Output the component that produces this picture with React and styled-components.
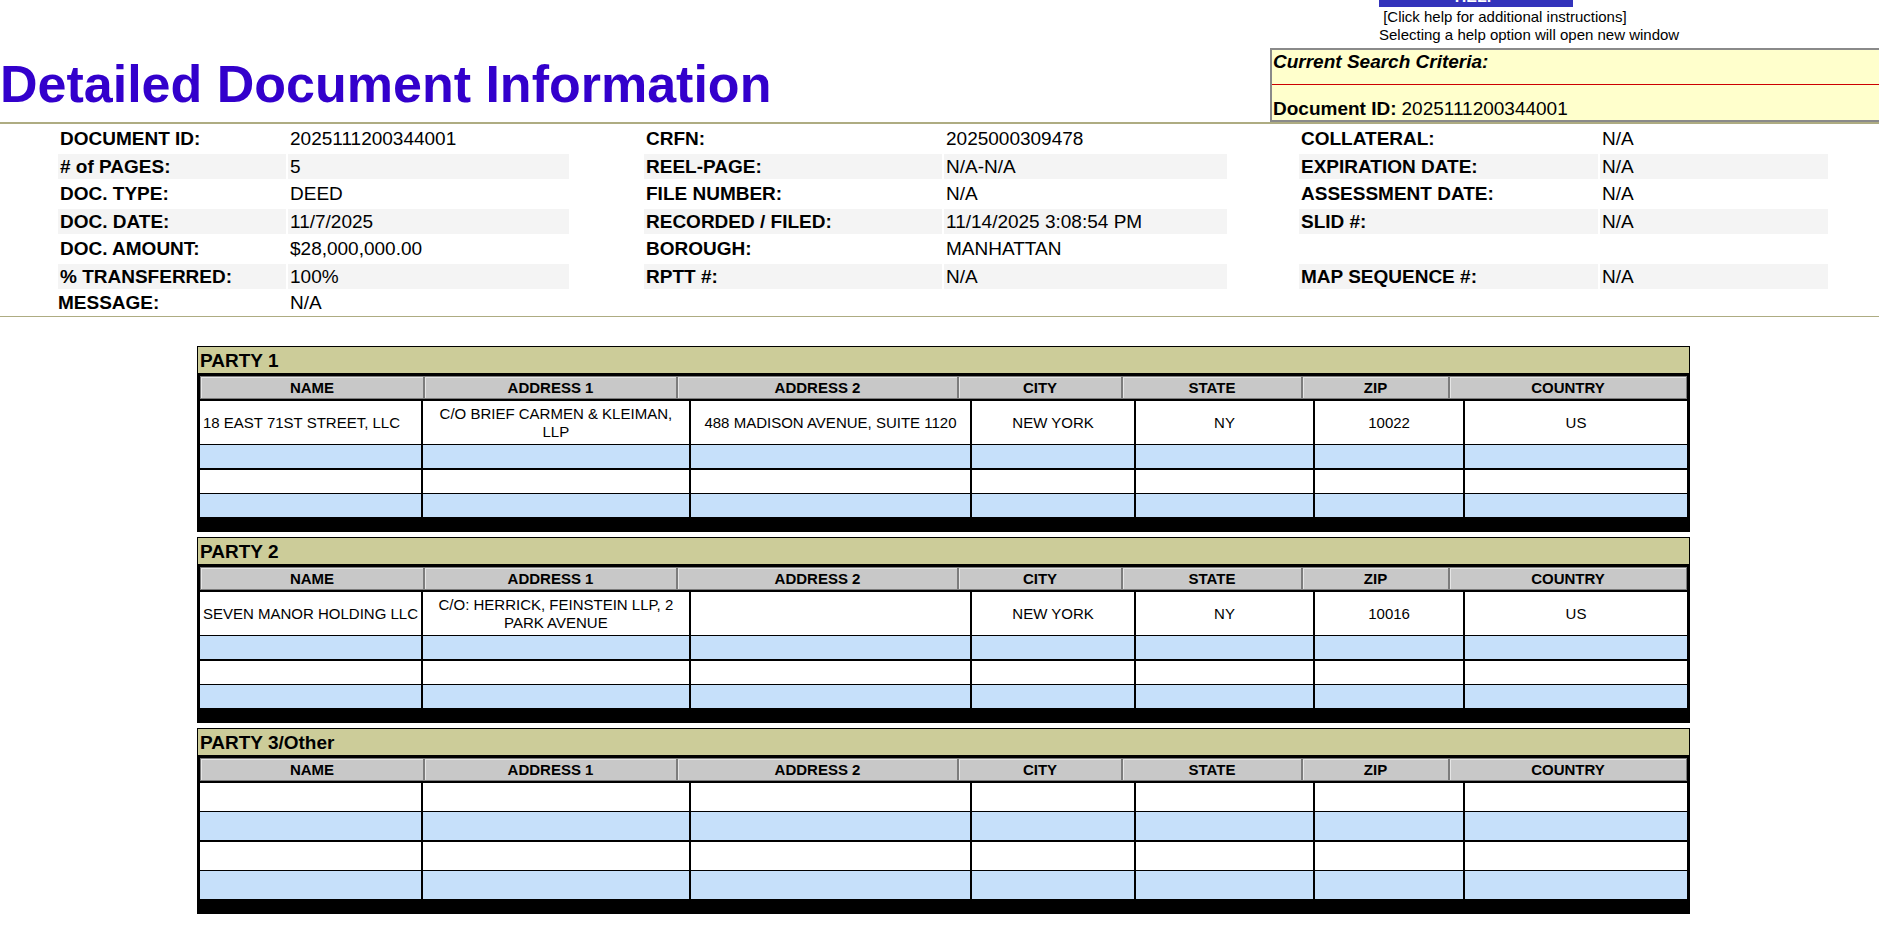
import React from 'react';
import styled, { createGlobalStyle } from 'styled-components';

const infoColumns = [
    {
        offset: 0,
        label: 228,
        value: 281,
        rows: [
            ['DOCUMENT ID:', '2025111200344001'],
            ['# of PAGES:', '5'],
            ['DOC. TYPE:', 'DEED'],
            ['DOC. DATE:', '11/7/2025'],
            ['DOC. AMOUNT:', '$28,000,000.00'],
            ['% TRANSFERRED:', '100%'],
        ],
    },
    {
        offset: 75,
        label: 298,
        value: 283,
        rows: [
            ['CRFN:', '2025000309478'],
            ['REEL-PAGE:', 'N/A-N/A'],
            ['FILE NUMBER:', 'N/A'],
            ['RECORDED / FILED:', '11/14/2025 3:08:54 PM'],
            ['BOROUGH:', 'MANHATTAN'],
            ['RPTT #:', 'N/A'],
        ],
    },
    {
        offset: 72,
        label: 299,
        value: 228,
        rows: [
            ['COLLATERAL:', 'N/A'],
            ['EXPIRATION DATE:', 'N/A'],
            ['ASSESSMENT DATE:', 'N/A'],
            ['SLID #:', 'N/A'],
            ['', ''],
            ['MAP SEQUENCE #:', 'N/A'],
        ],
    },
];

const headerCols = [224, 253, 281, 164, 180, 147, 238];
const dataCols = [223, 268, 282, 163, 179, 149, 224];
const headings = ['NAME', 'ADDRESS 1', 'ADDRESS 2', 'CITY', 'STATE', 'ZIP', 'COUNTRY'];

const empty = ['', '', '', '', '', '', ''];

const parties = [
    {
        title: 'PARTY 1',
        rows: [
            ['18 EAST 71ST STREET, LLC', 'C/O BRIEF CARMEN & KLEIMAN, LLP', '488 MADISON AVENUE, SUITE 1120', 'NEW YORK', 'NY', '10022', 'US'],
            empty, empty, empty,
        ],
    },
    {
        title: 'PARTY 2',
        rows: [
            ['SEVEN MANOR HOLDING LLC', 'C/O: HERRICK, FEINSTEIN LLP, 2 PARK AVENUE', '', 'NEW YORK', 'NY', '10016', 'US'],
            empty, empty, empty,
        ],
    },
    {
        title: 'PARTY 3/Other',
        rows: [empty, empty, empty, empty],
    },
];

const App = () => {
    return (
        <Page>
            <GlobalStyle />
            <Header>
                <Title>Detailed Document Information</Title>
                <RightBlock>
                    <HelpArea>
                        <HelpButton>HELP</HelpButton>
                        <HelpNote>&nbsp;[Click help for additional instructions]</HelpNote>
                        <HelpNote>Selecting a help option will open new window</HelpNote>
                    </HelpArea>
                    <CriteriaBox>
                        <CriteriaTitle>Current Search Criteria:</CriteriaTitle>
                        <CriteriaValue>
                            <b>Document ID:</b> 2025111200344001
                        </CriteriaValue>
                    </CriteriaBox>
                </RightBlock>
            </Header>
            <Rule />

            {/* document fields */}
            <InfoSection>
                {infoColumns.map((col, ci) => (
                    <InfoColumn key={ci} offset={col.offset} label={col.label} value={col.value}>
                        {col.rows.map(([label, value], ri) => (
                            <React.Fragment key={ri}>
                                <InfoLabel shaded={ri % 2 === 1}>{label}</InfoLabel>
                                <InfoValue shaded={ri % 2 === 1}>{value}</InfoValue>
                            </React.Fragment>
                        ))}
                    </InfoColumn>
                ))}
            </InfoSection>
            <MessageRow>
                <MessageLabel>MESSAGE:</MessageLabel>
                <InfoValue>N/A</InfoValue>
            </MessageRow>
            <Rule thin />

            {/* parties */}
            <Parties>
                {parties.map((party) => (
                    <PartyPanel key={party.title}>
                        <PartyTitle>{party.title}</PartyTitle>
                        <PartyBody>
                            <HeadRow>
                                {headings.map((h) => (
                                    <HeadCell key={h}>{h}</HeadCell>
                                ))}
                            </HeadRow>
                            <DataTable>
                                {party.rows.map((row, ri) => (
                                    <DataRow key={ri} thick={ri === 1}>
                                        {row.map((cell, ci) => (
                                            <DataCell key={ci} blue={ri % 2 === 1} left={ci === 0}>
                                                {cell}
                                            </DataCell>
                                        ))}
                                    </DataRow>
                                ))}
                            </DataTable>
                        </PartyBody>
                    </PartyPanel>
                ))}
            </Parties>
        </Page>
    );
};

export default App;

// Styled Components
const GlobalStyle = createGlobalStyle`
    body {
        margin: 0;
        background: #fff;
        overflow: hidden;
        font-family: "Liberation Sans", Arial, sans-serif;
        color: #000;
    }
`;

const Page = styled.div`
    width: 1879px;
    overflow: hidden;
`;

const Header = styled.div`
    display: flex;
    justify-content: space-between;
    align-items: flex-end;
    height: 122px;
`;

const Title = styled.h1`
    margin: 0 0 8px 0;
    font-size: 52px;
    line-height: 60px;
    font-weight: bold;
    color: #3300cc;
    white-space: nowrap;
`;

const RightBlock = styled.div`
    width: 609px;
    display: flex;
    flex-direction: column;
`;

const HelpArea = styled.div`
    padding-left: 109px;
    padding-bottom: 4px;
`;

const HelpButton = styled.div`
    width: 194px;
    height: 28px;
    margin-top: -21px;
    margin-bottom: 1px;
    box-sizing: border-box;
    padding-top: 10px;
    background: #3333bb;
    color: #fff;
    font-weight: bold;
    font-size: 16px;
    line-height: 16px;
    text-align: center;
    overflow: hidden;
`;

const HelpNote = styled.div`
    font-size: 15px;
    line-height: 18px;
    white-space: nowrap;
`;

const CriteriaBox = styled.div`
    width: 640px;
    height: 74px;
    box-sizing: border-box;
    background: #ffffcc;
    border: 2px solid #8a8a8a;
    border-right: none;
    display: flex;
    flex-direction: column;
`;

const CriteriaTitle = styled.div`
    height: 34px;
    padding-left: 1px;
    font-size: 19px;
    line-height: 24px;
    font-weight: bold;
    font-style: italic;
    border-bottom: 1px solid #cc0000;
`;

const CriteriaValue = styled.div`
    flex: 1;
    display: flex;
    align-items: flex-end;
    gap: 5px;
    padding-left: 1px;
    font-size: 19px;
    line-height: 22px;
`;

const Rule = styled.div`
    height: ${({ thin }) => (thin ? '1px' : '2px')};
    background: #aeac82;
`;

const InfoSection = styled.div`
    display: flex;
    padding: 2px 0 0 58px;
`;

const InfoColumn = styled.div`
    display: grid;
    margin-left: ${({ offset }) => offset}px;
    grid-template-columns: ${({ label, value }) => `${label}px ${value}px`};
    grid-auto-rows: 25.5px;
    column-gap: 2px;
    row-gap: 2px;
`;

const InfoLabel = styled.div`
    padding-left: 2px;
    font-size: 19px;
    font-weight: bold;
    line-height: 26px;
    white-space: nowrap;
    background: ${({ shaded }) => (shaded ? '#f4f4f4' : 'transparent')};
`;

const InfoValue = styled.div`
    padding-left: 2px;
    font-size: 19px;
    line-height: 26px;
    white-space: nowrap;
    background: ${({ shaded }) => (shaded ? '#f4f4f4' : 'transparent')};
`;

const MessageRow = styled.div`
    display: flex;
    gap: 2px;
    height: 25.5px;
    margin-top: 1px;
    padding-left: 56px;
`;

const MessageLabel = styled(InfoLabel)`
    width: 228px;
`;

const Parties = styled.div`
    display: flex;
    flex-direction: column;
    gap: 5px;
    margin: 29px 0 0 197px;
`;

const PartyPanel = styled.div`
    width: 1493px;
    box-sizing: border-box;
    background: #000;
    padding: 1px;
`;

const PartyTitle = styled.div`
    height: 26px;
    box-sizing: border-box;
    background: #cccc99;
    padding-left: 2px;
    font-size: 19px;
    font-weight: bold;
    line-height: 27px;
`;

const PartyBody = styled.div`
    padding: 3px 2px 14px 2px;
    display: flex;
    flex-direction: column;
    gap: 3px;
`;

const HeadRow = styled.div`
    display: grid;
    grid-template-columns: ${headerCols.map((w) => `${w}fr`).join(' ')};
    height: 22px;
`;

const HeadCell = styled.div`
    background: #c8c8c8;
    border: 1px solid #7c7c7c;
    box-shadow: inset 1px 1px 0 #e6e6e6;
    font-size: 15px;
    font-weight: bold;
    line-height: 21px;
    text-align: center;
`;

const DataTable = styled.div`
    display: flex;
    flex-direction: column;
    gap: 1px;
    height: 116px;
`;

const DataRow = styled.div`
    flex: 1 1 0;
    display: grid;
    grid-template-columns: ${dataCols.map((w) => `${w}fr`).join(' ')};
    column-gap: 2px;
    margin-bottom: ${({ thick }) => (thick ? '1px' : '0')};
`;

const DataCell = styled.div`
    display: flex;
    align-items: center;
    justify-content: ${({ left }) => (left ? 'flex-start' : 'center')};
    text-align: ${({ left }) => (left ? 'left' : 'center')};
    padding: 4px 3px 3px;
    background: ${({ blue }) => (blue ? '#c6e0fa' : '#fff')};
    font-size: 15px;
    line-height: 18px;
`;
